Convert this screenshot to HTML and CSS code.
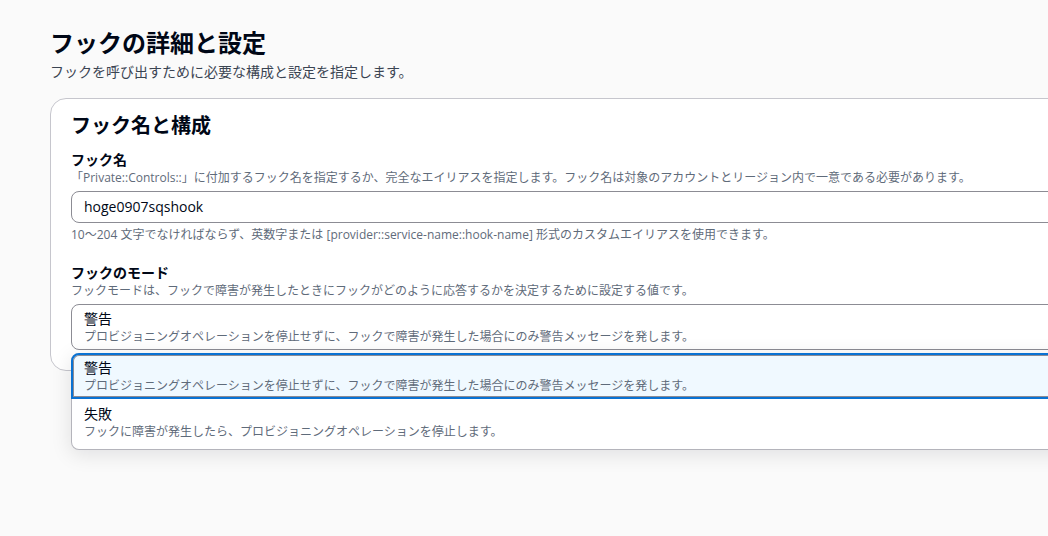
FILE: index.html
```html
<!DOCTYPE html>
<html lang="ja">
<head>
<meta charset="utf-8">
<title>フックの詳細と設定</title>
<link rel="stylesheet" href="styles.css">
</head>
<body>
<div class="viewport">
<div class="page">
  <h1 class="title">フックの詳細と設定</h1>
  <p class="subtitle">フックを呼び出すために必要な構成と設定を指定します。</p>
  <section class="card">
    <h2 class="card-title">フック名と構成</h2>
    <div class="field">
      <div class="label">フック名</div>
      <div class="desc">「Private::Controls::」に付加するフック名を指定するか、完全なエイリアスを指定します。フック名は対象のアカウントとリージョン内で一意である必要があります。</div>
      <div class="input">hoge0907sqshook</div>
      <div class="constraint">10〜204 文字でなければならず、英数字または [provider::service-name::hook-name] 形式のカスタムエイリアスを使用できます。</div>
    </div>
    <div class="field field-mode">
      <div class="label">フックのモード</div>
      <div class="desc">フックモードは、フックで障害が発生したときにフックがどのように応答するかを決定するために設定する値です。</div>
      <div class="select-wrap">
        <div class="select">
          <div class="opt-label">警告</div>
          <div class="opt-desc">プロビジョニングオペレーションを停止せずに、フックで障害が発生した場合にのみ警告メッセージを発します。</div>
        </div>
        <div class="dropdown">
          <div class="option option-active">
            <div class="opt-label">警告</div>
            <div class="opt-desc">プロビジョニングオペレーションを停止せずに、フックで障害が発生した場合にのみ警告メッセージを発します。</div>
          </div>
          <div class="option">
            <div class="opt-label">失敗</div>
            <div class="opt-desc">フックに障害が発生したら、プロビジョニングオペレーションを停止します。</div>
          </div>
        </div>
      </div>
    </div>
  </section>
</div>
</div>
</body>
</html>
```
FILE: styles.css
```css
html, body {
  margin: 0;
  padding: 0;
}
body {
  background: #fafafa;
  font-family: "Open Sans", "Noto Sans CJK JP", sans-serif;
  color: #000716;
}
.viewport {
  width: 100vw;
  height: 100vh;
  overflow: hidden;
}
.page {
  width: 1120px;
  padding: 28px 0 0 50px;
}
.title {
  margin: 0 0 4px;
  font-size: 24px;
  line-height: 30px;
  font-weight: 700;
}
.subtitle {
  margin: 0;
  font-size: 14px;
  line-height: 20px;
  color: #3a4452;
}
.card {
  margin-top: 16px;
  background: #ffffff;
  border: 1px solid #c6c6cd;
  border-radius: 16px;
  padding: 14px 20px 20px;
}
.card-title {
  margin: 0 0 11px;
  font-size: 20px;
  line-height: 26px;
  font-weight: 700;
}
.label {
  font-size: 14px;
  line-height: 20px;
  font-weight: 700;
}
.desc, .constraint {
  font-size: 12px;
  line-height: 16px;
  color: #5f6b7a;
}
.input {
  margin-top: 5px;
  height: 30px;
  box-sizing: content-box;
  border: 1px solid #8c8c94;
  border-radius: 8px;
  padding: 0 12px;
  font-size: 14px;
  line-height: 30px;
}
.constraint {
  margin-top: 4px;
}
.field-mode {
  margin-top: 20px;
}
.select-wrap {
  position: relative;
  margin-top: 5px;
}
.select {
  border: 1px solid #8c8c94;
  border-radius: 8px;
  padding: 4px 12px;
}
.opt-label {
  font-size: 14px;
  line-height: 20px;
}
.opt-desc {
  font-size: 12px;
  line-height: 16px;
  color: #5f6b7a;
}
.dropdown {
  position: absolute;
  left: 0;
  right: 0;
  top: 49px;
  background: #ffffff;
  border: 1px solid #b4b4bb;
  border-top-color: #d1d1d6;
  border-radius: 8px;
  box-shadow: 0 4px 20px 1px rgba(0, 7, 22, 0.10);
  z-index: 2;
}
.option {
  padding: 5px 12px 9px;
}
.option-active {
  background: #f0f9ff;
  border: 2px solid #0972d3;
  border-radius: 8px 8px 0 0;
  box-shadow: inset 0 0 0 1px #8c8c94;
  padding: 3px 11px;
  margin: -1px -1px 0;
}
```
